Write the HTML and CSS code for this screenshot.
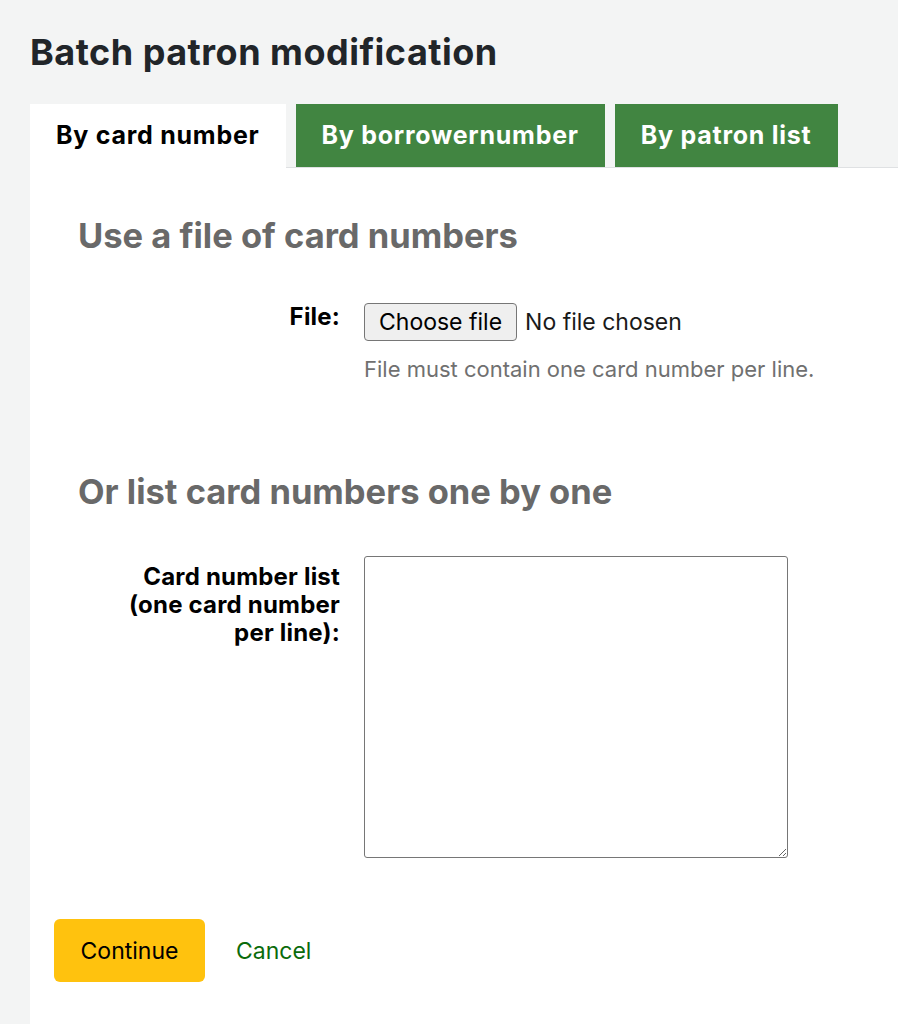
FILE: index.html
```html
<!DOCTYPE html>
<html>
<head>
  <title>Batch patron modification</title>
<link rel="stylesheet" href="styles.css">
</head>

<body>

<h1 class='page-title'>Batch patron modification</h1>

<ul class='tabs'>
  <li class='tab active'>By card number</li>
  <li class='tab'>By borrowernumber</li>
  <li class='tab'>By patron list</li>
</ul>

<div class='panel'>
  <form>
    <fieldset class='rows rows-file'>
      <h2>Use a file of card numbers</h2>
      <div class='row'>
        <label class='row-label' for='uploadfile'>File:</label>
        <div class='row-field'>
          <span class='file-input'>
            <button type='button' class='file-btn'>Choose file</button>
            <span class='file-name'>No file chosen</span>
          </span>
          <div class='hint'>File must contain one card number per line.</div>
        </div>
      </div>
    </fieldset>

    <fieldset class='rows rows-list'>
      <h2>Or list card numbers one by one</h2>
      <div class='row'>
        <label class='row-label' for='cardnumberlist'>Card number list (one card number per line):</label>
        <div class='row-field'>
          <textarea id='cardnumberlist' class='list-box'></textarea>
        </div>
      </div>
    </fieldset>

    <div class='actions'>
      <button type='submit' class='btn-primary'>Continue</button>
      <a href='#' class='cancel'>Cancel</a>
    </div>
  </form>
</div>

</body>
</html>
```

FILE: styles.css
```css
html, body {
  background: #f3f4f4;
}
body {
  font-family: Inter, 'Liberation Sans', sans-serif;
  margin: 0;
  color: #000;
}
.page-title {
  font-size: 36px;
  line-height: 44px;
  font-weight: 700;
  color: #212529;
  margin: 0 0 30px;
  padding: 30px 0 0 30px;
  letter-spacing: 0.5px;
}
.tabs {
  display: flex;
  list-style: none;
  margin: 0 0 0 30px;
  padding: 0;
  border-bottom: 1px solid #dfe1e3;
}
.tab {
  font-size: 25px;
  font-weight: 700;
  letter-spacing: 0.75px;
  height: 63px;
  line-height: 63px;
  padding: 0 26px;
  margin-right: 10px;
  background: #418541;
  color: #fff;
}
.tab.active {
  background: #fff;
  color: #000;
  margin-bottom: -1px;
  height: 64px;
}
.panel {
  background: #fff;
  margin-left: 30px;
  padding: 47px 24px 60px;
}
.rows {
  border: 0;
  margin: 0;
  padding: 0 0 0 24px;
}
.rows h2 {
  font-size: 34.5px;
  line-height: 42px;
  font-weight: 700;
  color: #696969;
  margin: 0;
}
.rows-file h2 {
  margin-bottom: 46px;
}
.rows-list h2 {
  margin-bottom: 50px;
}
.row {
  display: flex;
  align-items: flex-start;
}
.row-label {
  box-sizing: border-box;
  width: 262px;
  padding-left: 40px;
  margin-right: 24px;
  text-align: right;
  font-weight: 700;
  font-size: 24px;
  letter-spacing: 0.2px;
  line-height: 28px;
}
.file-input {
  display: flex;
  align-items: center;
  font-size: 23px;
}
.file-btn {
  font-family: Inter, 'Liberation Sans', sans-serif;
  font-size: 23px;
  height: 38px;
  padding: 0 14px;
  background: #efefef;
  border: 1px solid #767676;
  border-radius: 4px;
  color: #000;
  margin-right: 8px;
}
.file-name {
  color: #1a1a1a;
}
.hint {
  color: #707070;
  font-size: 22px;
  line-height: 28px;
  margin-top: 14px;
  margin-bottom: 88px;
}
.list-box {
  display: block;
  width: 424px;
  height: 302px;
  box-sizing: border-box;
  border: 1px solid #767676;
  border-radius: 3px;
  margin-top: -7px;
}
.actions {
  display: flex;
  align-items: center;
  margin-top: 61px;
}
.btn-primary {
  font-family: Inter, 'Liberation Sans', sans-serif;
  font-size: 23px;
  width: 151px;
  height: 63px;
  background: #ffc20e;
  border: 0;
  border-radius: 6px;
  color: #000;
  margin-right: 31px;
}
.cancel {
  font-size: 23px;
  color: #0b6b0b;
  text-decoration: none;
}
```
